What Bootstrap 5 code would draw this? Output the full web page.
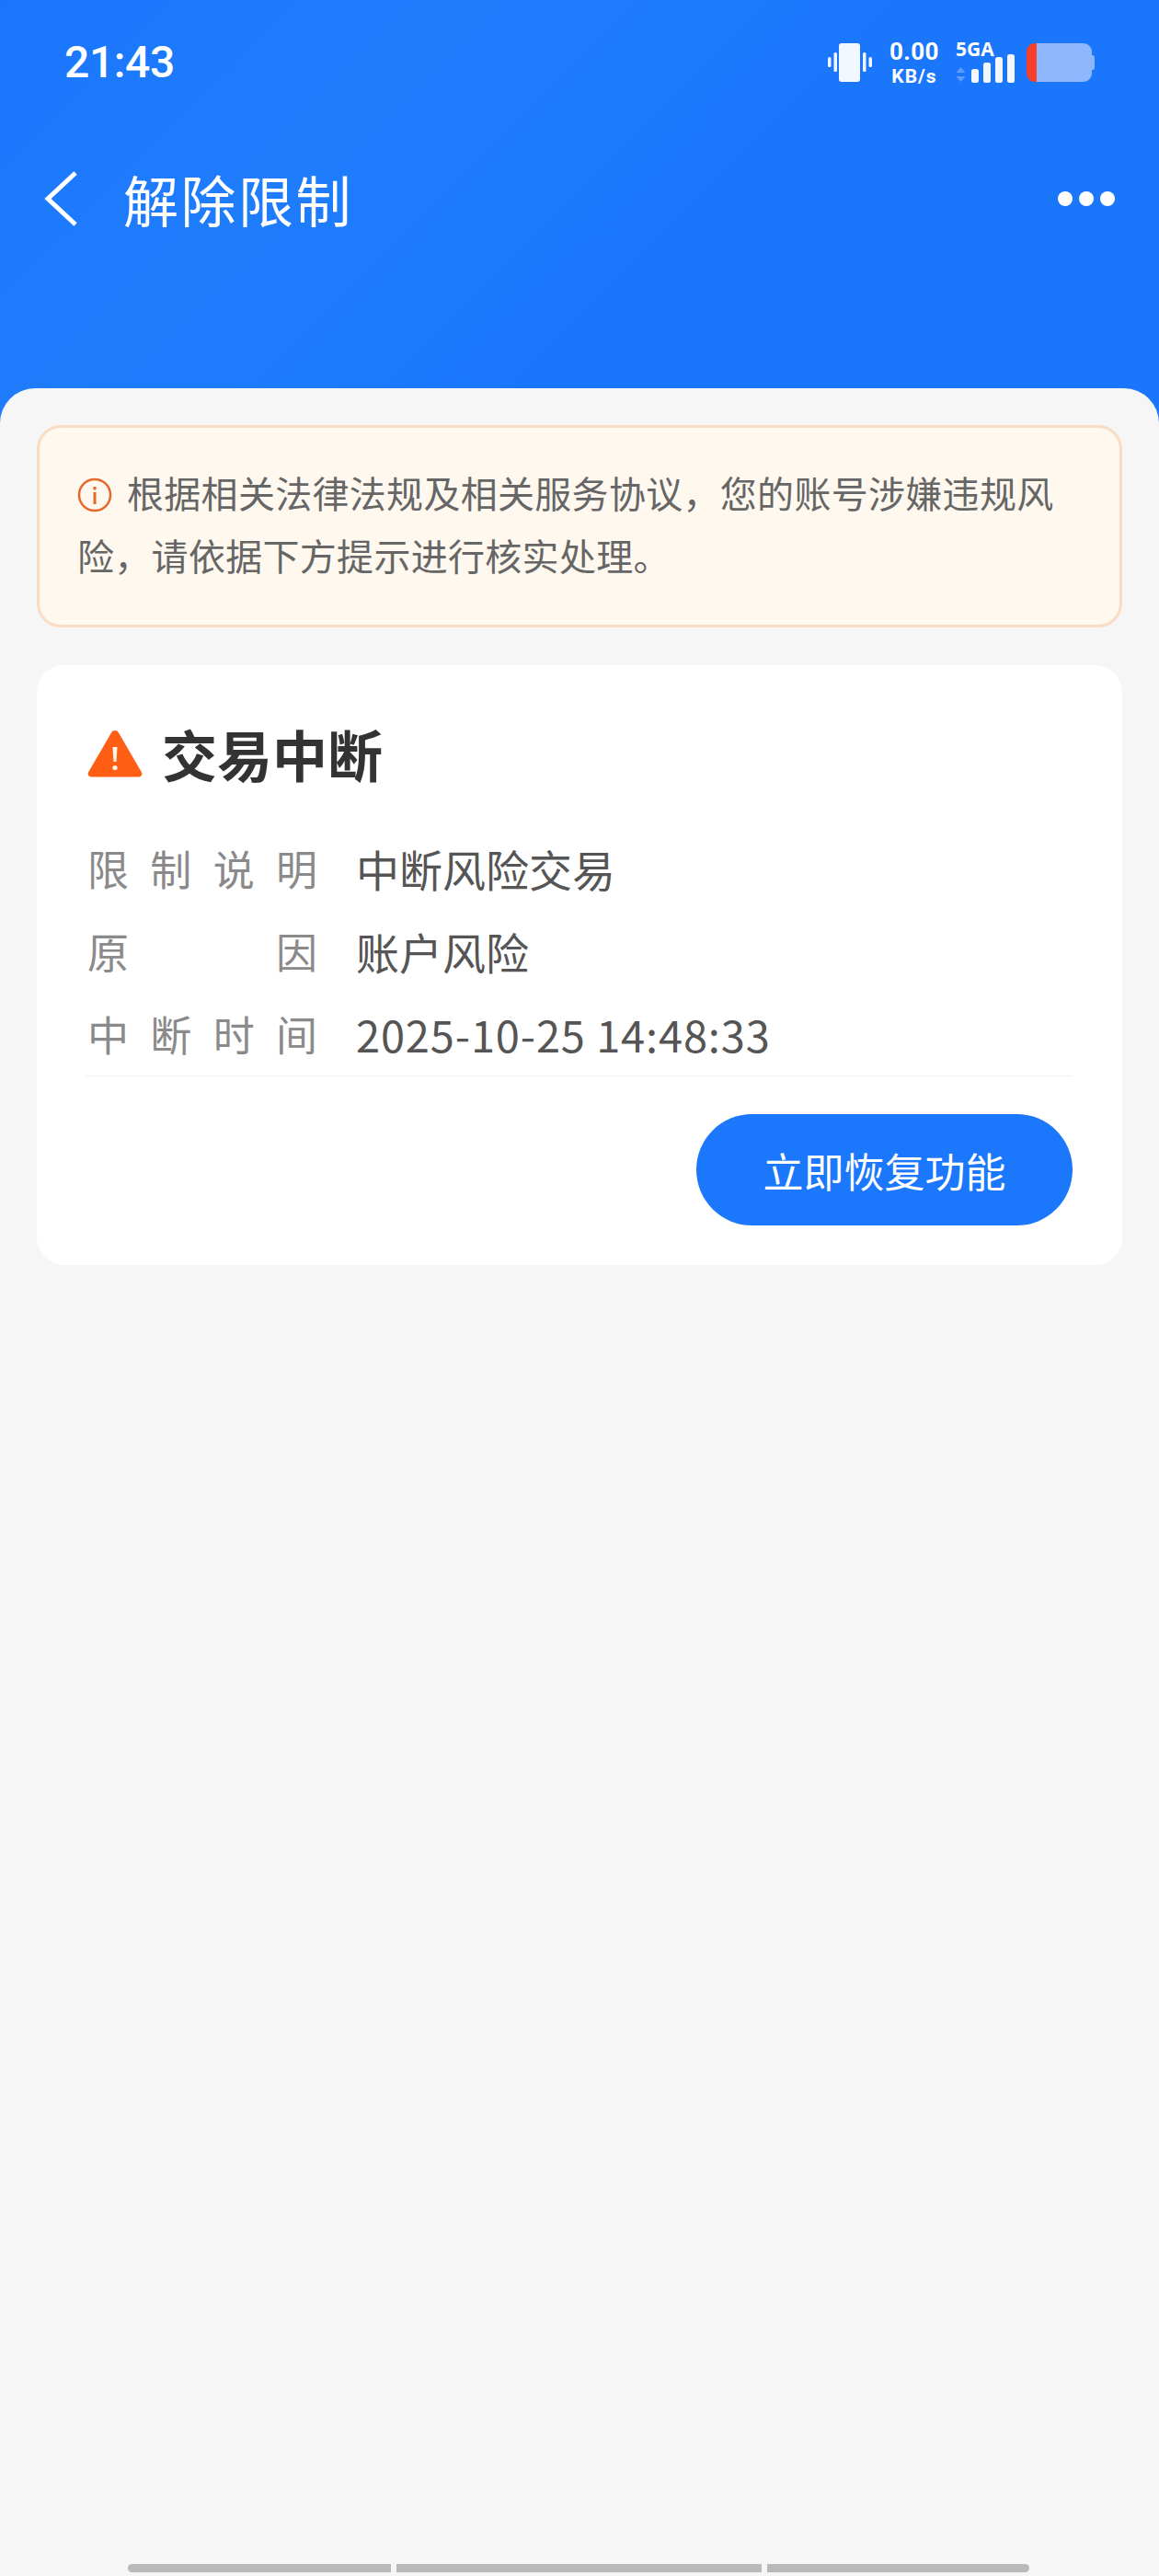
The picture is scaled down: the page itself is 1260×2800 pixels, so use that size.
<!DOCTYPE html>
<html lang="zh-CN">
<head>
<meta charset="utf-8">
<title>解除限制</title>
<link href="https://cdn.jsdelivr.net/npm/bootstrap@5.3.0/dist/css/bootstrap.min.css" rel="stylesheet">
<style>
html,body{margin:0;padding:0;}
body{font-family:"Noto Sans CJK SC","Noto Sans",sans-serif;background:#1b78fc;}
.screen{height:2800px;background:linear-gradient(135deg,#1a76fc 0,#1f7dfc 350px,#1a77fc 700px);overflow:hidden;}
.top-area{height:422px;color:#fff;}
.status-row{height:136px;padding:0 70px 0 70px;}
.clock{font-family:Roboto,"Open Sans",sans-serif;font-size:48px;font-weight:500;line-height:1;letter-spacing:-.4px;}
.speed{font-family:Roboto,sans-serif;font-weight:700;line-height:normal;text-align:center;width:58px;margin:0 16px 0 17px;}
.speed-num{font-size:26px;letter-spacing:.4px;}
.speed-unit{font-size:21px;letter-spacing:1px;}
.net-box{position:relative;width:66px;height:44px;}
.net-label{position:absolute;left:0;top:-4px;font-family:"Open Sans",sans-serif;font-size:21px;font-weight:700;line-height:1.1;}
.net-gap{margin-left:11px;}
.nav-row{height:160px;padding:0 48px;}
.page-title{font-size:60px;font-weight:400;line-height:1;margin:0 0 0 50px;letter-spacing:2.5px;}
.more-dots{gap:7px;}
.more-dots span{width:16px;height:16px;border-radius:50%;background:#fff;display:block;}
.sheet{background:#f6f6f6;border-radius:38px 38px 0 0;height:2378px;padding:40px 40px 4px;}
.notice-box{background:#fff8ef;border:3px solid #f9dcc4;border-radius:26px;padding:36px 38px 34px 41px;font-size:40px;letter-spacing:.3px;line-height:68px;color:#666;height:220px;}
.notice-ico{display:inline-block;width:38px;height:38px;vertical-align:-5px;margin-right:16px;}
.info-card{background:#fff;border-radius:30px;margin-top:41px;height:652px;padding:57px 54px 0 53px;}
.warn-title{font-size:60px;font-weight:700;line-height:1;color:#333;gap:21px;height:78px;padding-left:2px;}
.info-rows{margin-top:41px;border-bottom:1px solid #f0f0f0;}
.info-line{height:90px;font-size:47px;color:#555;line-height:90px;}
.info-key{width:250px;margin:0 42px 0 2px;font-size:45px;color:#8a8a8a;text-align:justify;text-align-last:justify;}
.stamp-text{letter-spacing:.85px;}
.restore-btn{background:#1b78fc;border:0;border-radius:61px;width:409px;height:121px;color:#fff;font-size:44px;line-height:1;padding:0;margin-top:41px;}
.restore-btn:hover{background:#1b78fc;color:#fff;}
.gesture-bars{gap:6px;padding-left:99px;margin-top:auto;}
.gesture-bars span{display:block;height:9px;background:#b9b9b9;}
.seg-a{width:286px;border-radius:5px 0 0 5px;}
.seg-b{width:397px;}
.seg-c{width:285px;border-radius:0 5px 5px 0;}
</style>
</head>
<body>
<div class="screen">
  <div class="top-area">
    <div class="status-row d-flex align-items-center justify-content-between">
      <div class="clock">21:43</div>
      <div class="d-flex align-items-center">
        <svg width="48" height="42" viewBox="0 0 48 42"><g fill="#f2f6ff"><rect x="12" y="0" width="23" height="42" rx="3"/><rect x="0" y="15" width="3.5" height="11" rx="1.5"/><rect x="6.5" y="10" width="3.5" height="21" rx="1.5"/><rect x="38" y="10" width="3.5" height="21" rx="1.5"/><rect x="44.500" y="15" width="3.500" height="11" rx="1.500"/></g></svg>
        <div class="speed"><div class="speed-num">0.00</div><div class="speed-unit">KB/s</div></div>
        <div class="net-box">
          <span class="net-label">5GA</span>
          <svg width="66" height="44" viewBox="0 0 66 44" class="d-block"><g fill="#f2f6ff"><rect x="17" y="29" width="8" height="15" rx="2.500"/><rect x="30" y="22" width="8" height="22" rx="2.500"/><rect x="43" y="16" width="8" height="28" rx="2.500"/><rect x="56" y="13" width="8" height="31" rx="2.500"/></g><g fill="#5d9bff"><path d="M5.500 27l5 6H.5z"/><path d="M5.500 43l5-6H.5z"/></g></svg>
        </div>
        <svg class="net-gap" width="74" height="42" viewBox="0 0 74 42"><path d="M11 0h51a9 9 0 0 1 9 9v4h.5a2.500 2.500 0 0 1 2.500 2.500v11a2.500 2.500 0 0 1-2.500 2.500H71v4a9 9 0 0 1-9 9H11z" fill="#8db6fd"/><path d="M11 0H9a9 9 0 0 0-9 9v24a9 9 0 0 0 9 9h2z" fill="#f7402b"/></svg>
      </div>
    </div>
    <div class="nav-row d-flex align-items-center">
      <svg width="36" height="60" viewBox="0 0 36 60"><path d="M34 2L4 30l30 28" fill="none" stroke="#fff" stroke-width="5"/></svg>
      <h1 class="page-title">解除限制</h1>
      <div class="more-dots d-flex ms-auto"><span></span><span></span><span></span></div>
    </div>
  </div>
  <div class="sheet d-flex flex-column">
    <div class="notice-box"><svg class="notice-ico" viewBox="0 0 38 38"><circle cx="19" cy="19" r="17" fill="none" stroke="#e6692c" stroke-width="2.500"/><rect x="17.500" y="16" width="3" height="13" fill="#e6692c"/><rect x="17.500" y="10" width="3" height="3.500" fill="#e6692c"/></svg>根据相关法律法规及相关服务协议，您的账号涉嫌违规风险，请依据下方提示进行核实处理。</div>
    <div class="info-card">
      <div class="warn-title d-flex align-items-center">
        <svg width="60" height="52" viewBox="0 0 60 52"><path d="M26 3.500a4.500 4.500 0 0 1 8 0l25 43a3.500 3.500 0 0 1-3 5H4a3.500 3.500 0 0 1-3-5z" fill="#ff5f14"/><path d="M27.500 19h5l-1 16h-3z" fill="#fff5e8"/><circle cx="30" cy="41.500" r="2.600" fill="#fff5e8"/></svg>
        <span>交易中断</span>
      </div>
      <div class="info-rows">
        <div class="info-line d-flex"><div class="info-key">限制说明</div><div>中断风险交易</div></div>
        <div class="info-line d-flex"><div class="info-key">原因</div><div>账户风险</div></div>
        <div class="info-line d-flex"><div class="info-key">中断时间</div><div class="stamp-text">2025-10-25 14:48:33</div></div>
      </div>
      <div class="d-flex justify-content-end"><button type="button" class="btn restore-btn">立即恢复功能</button></div>
    </div>
    <div class="gesture-bars d-flex"><span class="seg-a"></span><span class="seg-b"></span><span class="seg-c"></span></div>
  </div>
</div>
<script src="https://cdn.jsdelivr.net/npm/bootstrap@5.3.0/dist/js/bootstrap.bundle.min.js"></script>
</body>
</html>
